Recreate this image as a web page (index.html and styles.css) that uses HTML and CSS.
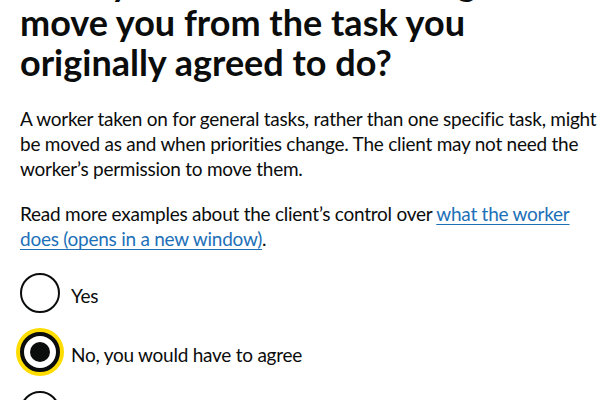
FILE: index.html
```html
<!DOCTYPE html>
<html lang="en">
<head>
<meta charset="utf-8">
<title>Does your client have the right to move you?</title>
<link rel="stylesheet" href="styles.css">
</head>
<body>
<main class="page">
  <fieldset class="fieldset">
    <legend class="legend">
      <h1 class="heading">Does your client have the right to<br>move you from the task you<br>originally agreed to do?</h1>
    </legend>
    <p class="body-text">A worker taken on for general tasks, rather than one specific task, might be moved as and when priorities change. The client may not need the worker’s permission to move them.</p>
    <p class="body-text body-text--last">Read more examples about the client’s control over <a class="link" href="#">what the worker does (opens in a new window)</a>.</p>
    <div class="radios">
      <label class="radio">
        <span class="radio__control"></span>
        <span class="radio__label">Yes</span>
      </label>
      <label class="radio radio--checked radio--focused">
        <span class="radio__control"></span>
        <span class="radio__label">No, you would have to agree</span>
      </label>
      <label class="radio">
        <span class="radio__control"></span>
        <span class="radio__label">No, that would require a new contract</span>
      </label>
    </div>
  </fieldset>
</main>
</body>
</html>
```
FILE: styles.css
```css
html, body {
  margin: 0;
  padding: 0;
  background: #ffffff;
  overflow: hidden;
}
body {
  font-family: Lato, "Liberation Sans", Arial, sans-serif;
  color: #0b0c0c;
}
.page {
  padding: 0 6px 0 20px;
}
.fieldset {
  border: 0;
  margin: 0;
  padding: 0;
  min-width: 0;
}
.legend {
  padding: 0;
  display: block;
  width: 100%;
}
.heading {
  margin: -38px 0 24px;
  font-size: 36px;
  line-height: 40px;
  font-weight: 700;
  white-space: nowrap;
}
.body-text {
  margin: 0 0 20px;
  font-size: 19px;
  line-height: 25px;
  letter-spacing: -0.25px;
}
.body-text--last {
  margin-bottom: 22px;
}
.link {
  color: #1d70b8;
  text-decoration: underline;
  text-decoration-thickness: 1px;
  text-underline-offset: 0.16em;
}
.radios {
  display: flex;
  flex-direction: column;
  gap: 19px;
}
.radio {
  display: flex;
  align-items: center;
  gap: 11px;
  min-height: 40px;
  font-size: 19px;
  line-height: 25px;
  letter-spacing: -0.25px;
}
.radio__label {
  padding-top: 5px;
}
.radio__control {
  position: relative;
  flex: 0 0 40px;
  width: 40px;
  height: 40px;
  box-sizing: border-box;
  border: 2px solid #0b0c0c;
  border-radius: 50%;
  background: #fff;
}
.radio--focused .radio__control {
  border-width: 4px;
  box-shadow: 0 0 0 4px #ffdd00;
}
.radio--checked .radio__control::after {
  content: "";
  position: absolute;
  left: 50%;
  top: 50%;
  width: 20px;
  height: 20px;
  margin: -10px 0 0 -10px;
  border-radius: 50%;
  background: #0b0c0c;
}
```
